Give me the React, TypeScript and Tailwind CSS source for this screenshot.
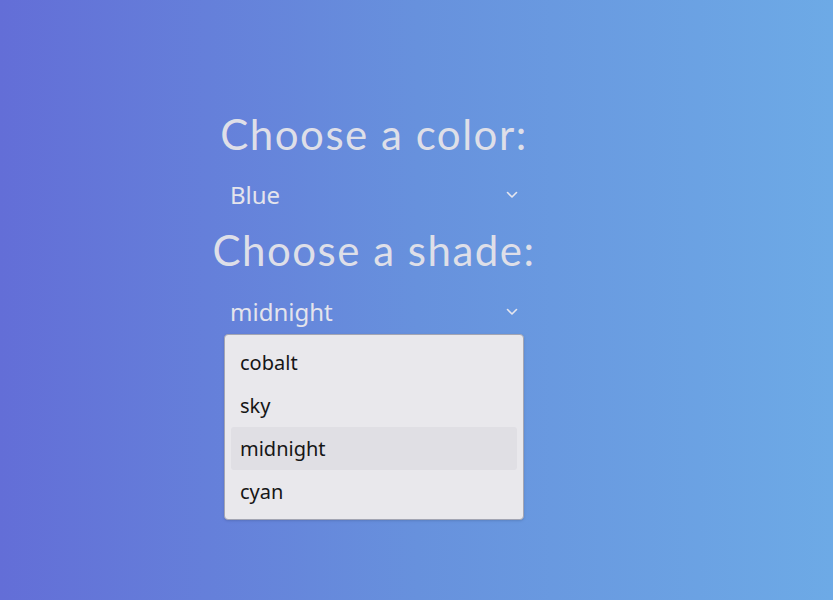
import React, { useState } from 'react'

const shades = ['cobalt', 'sky', 'midnight', 'cyan']

const Chevron = () => (
  <svg width="12" height="8" viewBox="0 0 12 8" fill="none">
    <path d="M1.5 1.5L6 6L10.5 1.5" stroke="#e6e6ee" strokeWidth="1.6" strokeLinecap="round" strokeLinejoin="round" />
  </svg>
)

const SelectRow = ({ value }: { value: string }) => (
  <div className="flex h-[44px] w-full items-center justify-between pl-[6px] pr-[6px] text-[24px] text-[#e4e4ec]">
    <span>{value}</span>
    <Chevron />
  </div>
)

export default function App() {
  const [active, setActive] = useState('midnight')

  return (
    <div
      className="flex h-[600px] w-full bg-[linear-gradient(90deg,#636ed7_0%,#6791dd_50%,#6daae6_100%)]"
      style={{ fontFamily: '"Noto Sans", "Open Sans", sans-serif' }}
    >
      <div className="ml-[224px] mt-[110px] flex w-[300px] flex-col items-center">
        <h1 className="whitespace-nowrap text-[42px] leading-[48px] font-normal tracking-[1.5px] text-[#dedfe8] [font-family:Lato,sans-serif]">
          Choose a color:
        </h1>
        <div className="mt-[15px] w-full">
          <SelectRow value="Blue" />
        </div>
        <h1 className="mt-[9px] whitespace-nowrap text-[42px] leading-[48px] font-normal tracking-[1.5px] text-[#dedfe8] [font-family:Lato,sans-serif]">
          Choose a shade:
        </h1>
        <div className="mt-[16px] w-full">
          <SelectRow value={active} />
        </div>
        <div className="w-full rounded-[4px] border border-[#a3a5b3] bg-[#e9e8ec] p-[6px] shadow-sm">
          {shades.map((s) => (
            <div
              key={s}
              onMouseEnter={() => setActive(s)}
              className={`flex h-[43px] items-center rounded-[3px] px-[9px] text-[20px] text-[#161616] ${
                s === 'midnight' ? 'bg-[#e0dfe4]' : ''
              }`}
            >
              {s}
            </div>
          ))}
        </div>
      </div>
    </div>
  )
}
